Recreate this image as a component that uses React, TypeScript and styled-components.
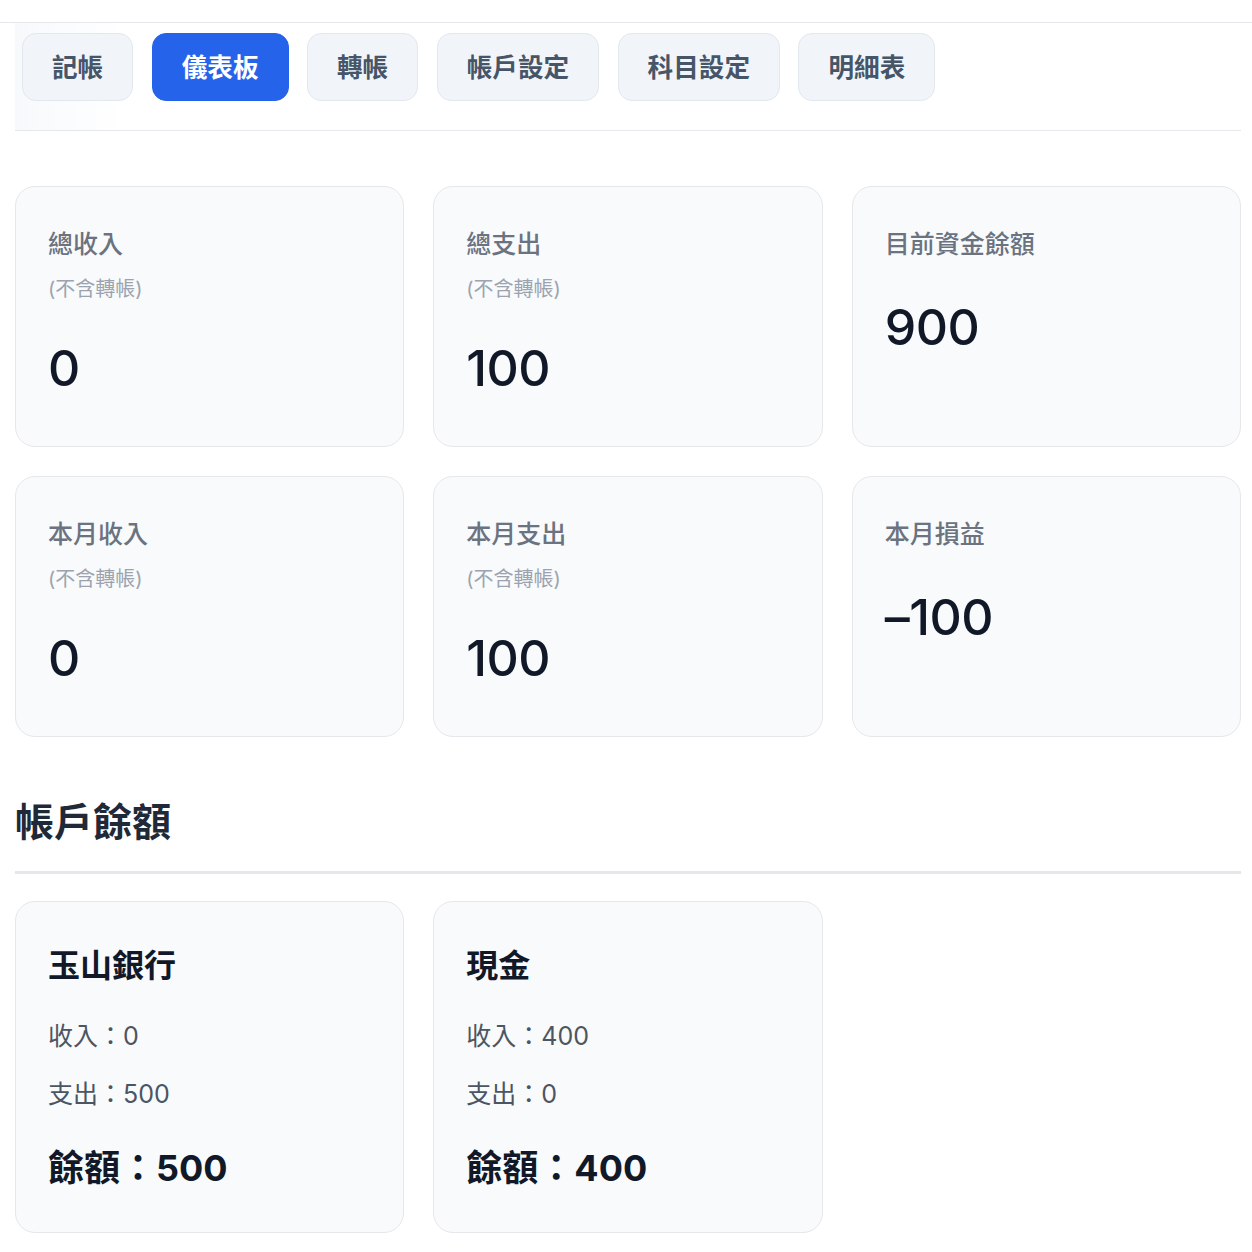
import React, { useState } from 'react'
import styled, { createGlobalStyle } from 'styled-components'

const GlobalStyle = createGlobalStyle`
  * { box-sizing: border-box; }
  body {
    margin: 0;
    background: #ffffff;
    font-family: Inter, "Noto Sans CJK TC", "Noto Sans", sans-serif;
    color: #111827;
  }
`

const tabs = ['記帳', '儀表板', '轉帳', '帳戶設定', '科目設定', '明細表']

const stats = [
  { label: '總收入', note: '(不含轉帳)', value: '0' },
  { label: '總支出', note: '(不含轉帳)', value: '100' },
  { label: '目前資金餘額', value: '900' },
  { label: '本月收入', note: '(不含轉帳)', value: '0' },
  { label: '本月支出', note: '(不含轉帳)', value: '100' },
  { label: '本月損益', value: '–100' },
]

const accounts = [
  { name: '玉山銀行', income: 0, expense: 500, balance: 500 },
  { name: '現金', income: 400, expense: 0, balance: 400 },
]

const App = () => {
  const [active, setActive] = useState<number>(1)

  return (
    <>
      <GlobalStyle />
      <TopBar />
      <Page>
        <TabBar>
          {tabs.map((t, i) => (
            <Tab key={t} active={i === active} onClick={() => setActive(i)}>
              {t}
            </Tab>
          ))}
        </TabBar>

        <StatGrid>
          {stats.map((s) => (
            <StatCard key={s.label}>
              <StatLabel>{s.label}</StatLabel>
              {s.note && <StatNote>{s.note}</StatNote>}
              <StatValue>{s.value}</StatValue>
            </StatCard>
          ))}
        </StatGrid>

        <SectionTitle>帳戶餘額</SectionTitle>

        <AccountGrid>
          {accounts.map((a) => (
            <AccountCard key={a.name}>
              <AccountName>{a.name}</AccountName>
              <AccountLine>收入：{a.income}</AccountLine>
              <AccountLine gap={22}>支出：{a.expense}</AccountLine>
              <AccountBalance>餘額：{a.balance}</AccountBalance>
            </AccountCard>
          ))}
        </AccountGrid>
      </Page>
    </>
  )
}

export default App

const TopBar = styled.div`
  height: 23px;
  border-bottom: 1px solid #e5e7eb;
`

const Page = styled.div`
  padding: 0 11px 40px 15px;
`

const TabBar = styled.nav`
  display: flex;
  gap: 18.5px;
  padding: 10px 7px 29px;
  border-bottom: 1px solid #e5e7eb;
  background: linear-gradient(90deg, rgba(241, 245, 249, 0.6) 0px, rgba(255, 255, 255, 0) 110px);
`

const Tab = styled.button<{ active?: boolean }>`
  height: 68px;
  padding: 0 29px 3px;
  border-radius: 14px;
  border: 1px solid ${({ active }) => (active ? '#2563eb' : '#e2e8f0')};
  background: ${({ active }) => (active ? '#2563eb' : '#f1f5f9')};
  color: ${({ active }) => (active ? '#ffffff' : '#475569')};
  font-family: inherit;
  font-size: 25.6px;
  font-weight: 700;
  cursor: pointer;
`

const StatGrid = styled.div`
  display: grid;
  grid-template-columns: repeat(3, 1fr);
  column-gap: 29px;
  row-gap: 29px;
  margin-top: 55px;
`

const StatCard = styled.div`
  background: #f8fafc;
  border: 1px solid #e5e7eb;
  border-radius: 20px;
  padding: 39px 32px 47px;
  min-height: 261px;
`

const StatLabel = styled.div`
  font-size: 25px;
  line-height: 36px;
  font-weight: 500;
  color: #6b7280;
`

const StatNote = styled.div`
  margin-top: 13px;
  font-size: 20px;
  line-height: 28px;
  color: #9ca3af;
`

const StatValue = styled.div`
  margin-top: 35px;
  font-size: 50px;
  line-height: 60px;
  font-weight: 500;
  letter-spacing: -0.5px;
  color: #111827;
`

const SectionTitle = styled.h2`
  margin: 60px 0 0;
  padding-bottom: 24px;
  border-bottom: 3px solid #e5e7eb;
  font-size: 39px;
  line-height: 50px;
  font-weight: 700;
  color: #1f2937;
`

const AccountGrid = styled.div`
  display: grid;
  grid-template-columns: repeat(3, 1fr);
  column-gap: 29px;
  margin-top: 27px;
`

const AccountCard = styled.div`
  background: #f8fafc;
  border: 1px solid #e5e7eb;
  border-radius: 20px;
  padding: 41px 32px 39px;
`

const AccountName = styled.div`
  font-size: 32px;
  line-height: 45px;
  font-weight: 700;
  color: #111827;
`

const AccountLine = styled.div<{ gap?: number }>`
  margin-top: ${({ gap }) => gap ?? 30}px;
  font-size: 25px;
  line-height: 36px;
  color: #4b5563;
`

const AccountBalance = styled.div`
  margin-top: 31px;
  font-size: 36px;
  line-height: 50px;
  font-weight: 700;
  color: #111827;
`
